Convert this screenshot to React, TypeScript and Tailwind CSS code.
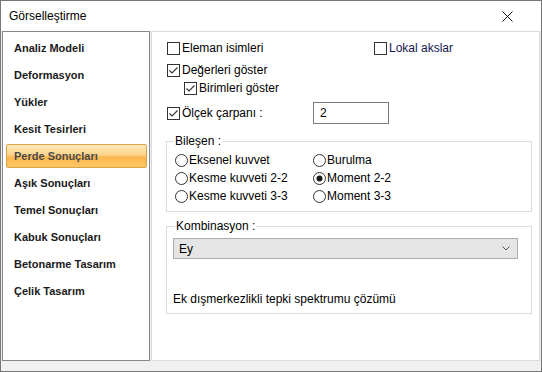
import React from "react";

const menuItems = [
    "Analiz Modeli",
    "Deformasyon",
    "Yükler",
    "Kesit Tesirleri",
    "Perde Sonuçları",
    "Aşık Sonuçları",
    "Temel Sonuçları",
    "Kabuk Sonuçları",
    "Betonarme Tasarım",
    "Çelik Tasarım",
];

function CheckBox({checked}: { checked?: boolean }) {
    return (
        <svg width="13" height="13" viewBox="0 0 13 13" className="shrink-0">
            <rect x="0.5" y="0.5" width="12" height="12" fill="#fff" stroke="#333"/>
            {checked && <path d="M2.5 6.5 L5 9 L10.5 3.5" fill="none" stroke="#333" strokeWidth="1.1"/>}
        </svg>
    );
}

function Radio({checked}: { checked?: boolean }) {
    return (
        <svg width="13" height="13" viewBox="0 0 13 13" className="shrink-0">
            <circle cx="6.5" cy="6.5" r="6" fill="#fff" stroke="#333"/>
            {checked && <circle cx="6.5" cy="6.5" r="3" fill="#1a1a1a"/>}
        </svg>
    );
}

function CheckRow({label, checked, className = ""}: { label: string; checked?: boolean; className?: string }) {
    return (
        <div className={"flex items-center gap-[2px] " + className}>
            <CheckBox checked={checked}/>
            <span>{label}</span>
        </div>
    );
}

function RadioRow({label, checked}: { label: string; checked?: boolean }) {
    return (
        <div className="flex items-center gap-[1px] h-[18px]">
            <Radio checked={checked}/>
            <span>{label}</span>
        </div>
    );
}

export default function App() {
    return (
        <div className="w-[542px] h-[372px] border border-[#777] bg-[#f0f0f0] flex flex-col font-['Liberation_Sans',sans-serif] text-[12px] text-black overflow-hidden">
            {/* title bar */}
            <div className="h-[30px] bg-white flex items-center justify-between pl-[8px] pr-[28px] shrink-0">
                <span className="text-[12px]">Görselleştirme</span>
                <svg width="11" height="11" viewBox="0 0 11 11">
                    <path d="M0.5 0.5 L10.5 10.5 M10.5 0.5 L0.5 10.5" stroke="#111" strokeWidth="1"/>
                </svg>
            </div>

            <div className="flex-1 flex pl-[1px] pr-[1px] pb-[10px] gap-[1px] min-h-0">
                {/* left menu */}
                <div className="w-[148px] bg-white border border-[#828790] flex flex-col gap-[3px] pt-[4px] pl-[3px] pr-[2px]">
                    {menuItems.map((item) => (
                        item === "Perde Sonuçları" ? (
                            <div key={item}
                                 className="h-[24px] flex items-center pl-[7px] border border-[#d8a24c] rounded-[2px] bg-[linear-gradient(to_bottom,#fde9b9_0%,#fdd48a_45%,#fbb74f_55%,#fcc764_100%)] text-[#4a4a4a] font-bold text-[11px]">
                                {item}
                            </div>
                        ) : (
                            <div key={item} className="h-[24px] flex items-center pl-[8px] text-[#1a1a1a] font-bold text-[11px]">
                                {item}
                            </div>
                        )
                    ))}
                </div>

                {/* right panel */}
                <div className="flex-1 bg-white border border-[#dadada] flex flex-col pl-[14px] pt-[8px]">
                    <div className="h-[16px] flex items-center pl-[1px]">
                        <CheckRow label="Eleman isimleri" className="w-[207px]"/>
                        <div className="flex items-center gap-[2px] text-[#15154f]">
                            <CheckBox/>
                            <span>Lokal akslar</span>
                        </div>
                    </div>
                    <div className="h-[16px] flex items-center pl-[1px] mt-[6px]">
                        <CheckRow label="Değerleri göster" checked/>
                    </div>
                    <div className="h-[16px] flex items-center pl-[18px] mt-[2px]">
                        <CheckRow label="Birimleri göster" checked/>
                    </div>
                    <div className="h-[22px] flex items-center pl-[1px] mt-[6px]">
                        <CheckRow label="Ölçek çarpanı :" checked className="w-[146px]"/>
                        <div className="w-[76px] h-[22px] border border-[#7a7a7a] flex items-center pl-[6px]">2</div>
                    </div>

                    {/* Bileşen */}
                    <fieldset className="w-[366px] mt-[10px] border border-[#dcdcdc] pl-[8px] pb-[6px] pt-[3px]">
                        <legend className="px-[1px] ml-[-1px] leading-[14px]">Bileşen :</legend>
                        <div className="grid grid-cols-[138px_1fr]">
                            <RadioRow label="Eksenel kuvvet"/>
                            <RadioRow label="Burulma"/>
                            <RadioRow label="Kesme kuvveti 2-2"/>
                            <RadioRow label="Moment 2-2" checked/>
                            <RadioRow label="Kesme kuvveti 3-3"/>
                            <RadioRow label="Moment 3-3"/>
                        </div>
                    </fieldset>

                    {/* Kombinasyon */}
                    <fieldset className="w-[366px] mt-[7px] border border-[#dcdcdc] pl-[6px] pr-[13px] pb-[7px]">
                        <legend className="px-[1px] ml-[2px] leading-[14px]">Kombinasyon :</legend>
                        <div className="mt-[5px] h-[21px] bg-[#e5e5e5] border border-[#adadad] flex items-center justify-between pl-[5px] pr-[7px]">
                            <span>Ey</span>
                            <svg width="8" height="5" viewBox="0 0 8 5">
                                <path d="M0.5 0.5 L4 4 L7.5 0.5" fill="none" stroke="#555" strokeWidth="1"/>
                            </svg>
                        </div>
                        <div className="mt-[33px] h-[14px] flex items-center">Ek dışmerkezlikli tepki spektrumu çözümü</div>
                    </fieldset>
                </div>
            </div>
        </div>
    );
}
